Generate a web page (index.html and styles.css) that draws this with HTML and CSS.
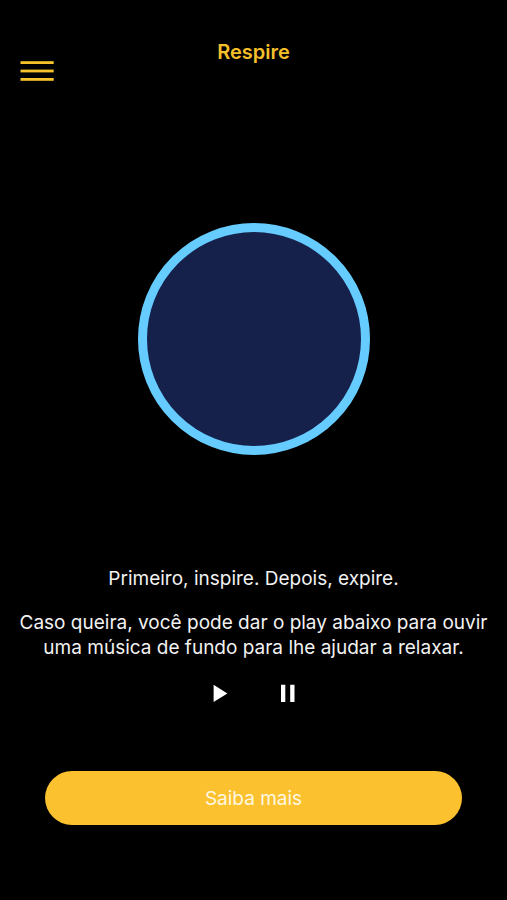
FILE: index.html
```html
<!DOCTYPE html>
<html lang="pt-BR">

<head>
    <meta charset="UTF-8">
    <meta name="viewport" content="width=device-width, initial-scale=1.0">
    <title>Respire</title>

    <link rel="stylesheet" href="styles.css">
</head>

<body>
    <header class="topo">
        <button class="menu" type="button" aria-label="Menu">
            <svg width="34" height="20" viewBox="0 0 34 20">
                <rect x="0.5" y="0.2" width="33.2" height="2.8" />
                <rect x="0.5" y="8.6" width="33.2" height="2.8" />
                <rect x="0.5" y="17" width="33.2" height="2.8" />
            </svg>
        </button>
        <h1>Respire</h1>
    </header>

    <main>
        <div class="circulo"></div>

        <p>Primeiro, inspire. Depois, expire.</p>
        <p>Caso queira, você pode dar o play abaixo para ouvir uma música de fundo para lhe ajudar a relaxar.</p>

        <div class="player">
            <button type="button" aria-label="Play">
                <svg width="30" height="30" viewBox="0 0 30 30">
                    <path d="M9.6 5.8v17.2L23.4 14.4z" />
                </svg>
            </button>
            <button type="button" aria-label="Pausar">
                <svg width="30" height="30" viewBox="0 0 30 30">
                    <path d="M7 5.8h4.3v17.2H7zM16.2 5.8h4.3v17.2h-4.3z" />
                </svg>
            </button>
        </div>

        <button class="saiba-mais" type="button">Saiba mais</button>
    </main>
</body>
</html>
```
FILE: styles.css
```css
* { box-sizing: border-box; }

body {
    margin: 0;
    background-color: #000;
    color: #f2f2f2;
    font-family: Inter, "Liberation Sans", sans-serif;
    font-size: 19px;
    line-height: 25px;
}

button {
    padding: 0;
    border: none;
    background: none;
    font: inherit;
    cursor: pointer;
}
svg { display: block; }

.topo {
    display: grid;
    grid-template-columns: 34px 1fr 34px;
    padding: 40px 20px 0;
}
.topo h1 {
    margin: 0;
    color: #f5bf2b;
    font-size: 20px;
    font-weight: 600;
    line-height: 24px;
    text-align: center;
}
.menu { height: 20px; margin-top: 21px; fill: #f5c22b; }

main { padding: 0 15px 70px; text-align: center; }

.circulo {
    width: 232px;
    height: 232px;
    margin: 142px auto 111px;
    border: 9px solid #66ccff;
    border-radius: 50%;
    background-color: #15214b;
}

p { margin: 0 0 19px; }

.player {
    display: flex;
    justify-content: center;
    gap: 40px;
    margin-bottom: 62px;
}
.player button { fill: #fff; }

.saiba-mais {
    display: block;
    width: calc(100% - 60px);
    height: 54px;
    margin: 0 auto;
    border-radius: 27px;
    background-color: #fcc12f;
    color: #fff8e0;
}
```
